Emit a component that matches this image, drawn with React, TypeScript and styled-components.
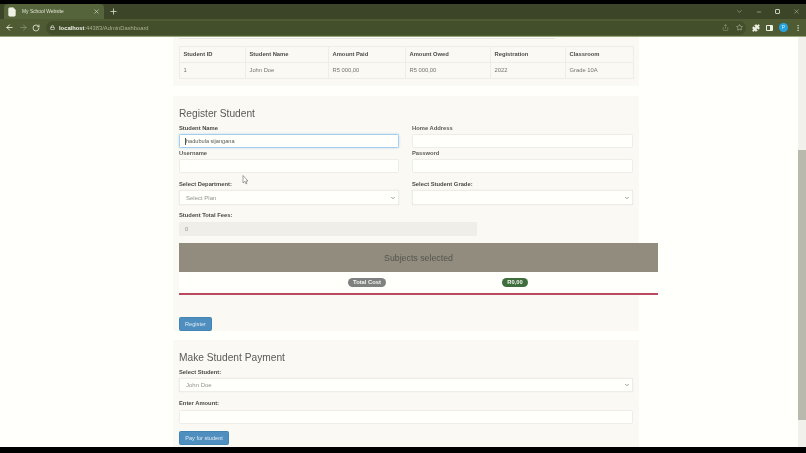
import React from "react";
import styled, { createGlobalStyle } from "styled-components";
import {
  ArrowLeft,
  ArrowRight,
  ChevronDown,
  EllipsisVertical,
  File,
  Lock,
  Minus,
  Plus,
  Puzzle,
  RotateCw,
  Share,
  Star,
  X,
} from "lucide-react";

const GlobalStyle = createGlobalStyle`
  html, body {
    margin: 0;
    padding: 0;
    overflow: hidden;
    background: #000;
  }
  * {
    box-sizing: border-box;
  }
`;

const Screen = styled.div`
  width: 806px;
  height: 453px;
  display: flex;
  flex-direction: column;
  background: #000;
  font-family: "Liberation Sans", Arial, sans-serif;
  filter: blur(0.4px);
  position: relative;
  overflow: hidden;
`;

const TabStrip = styled.div`
  height: 15px;
  margin-top: 4px;
  flex-shrink: 0;
  display: flex;
  align-items: flex-end;
  padding-left: 4px;
  background: #3c4527;
  color: #e6e8dc;
`;

const Tab = styled.div`
  width: 100px;
  height: 15px;
  display: flex;
  align-items: center;
  padding: 0 4px 0 3px;
  background: #56643c;
  border-radius: 4px 4px 0 0;
  font-size: 4.9px;
  gap: 5px;
`;

const TabTitle = styled.span`
  flex: 1;
  color: #dfe2d0;
`;

const NewTab = styled.div`
  width: 14px;
  margin-left: 2px;
  height: 15px;
  display: flex;
  align-items: center;
  justify-content: center;
`;

const WindowControls = styled.div`
  margin-left: auto;
  display: flex;
  align-items: center;
  height: 15px;
  padding-right: 6px;
  gap: 13px;
  color: #d8dbc8;
`;

const RestoreIcon = styled.div`
  width: 5px;
  height: 5px;
  border: 1px solid #c9ccb8;
  border-radius: 1px;
`;

const Toolbar = styled.div`
  height: 18px;
  flex-shrink: 0;
  display: flex;
  align-items: center;
  padding: 0 4px 0 5px;
  background: #4e5b33;
  color: #e2e5d4;
  border-bottom: 1px solid #98a47c;
`;

const NavIcons = styled.div`
  display: flex;
  align-items: center;
  gap: 4.5px;
  margin-right: 6px;
`;

const Omnibox = styled.div`
  flex: 1;
  height: 14px;
  display: flex;
  align-items: center;
  gap: 4px;
  padding: 0 3px 0 4px;
  border-radius: 7px;
  background: #434f2b;
  font-size: 5.8px;
  color: #a9b092;
`;

const Host = styled.span`
  color: #f0f1e6;
  font-weight: bold;
`;

const OmniEnd = styled.div`
  margin-left: auto;
  display: flex;
  align-items: center;
  gap: 7px;
  color: #a9af93;
`;

const ToolIcons = styled.div`
  display: flex;
  align-items: center;
  gap: 6px;
  margin-left: 6px;
`;

const SidePanelIcon = styled.div`
  width: 7px;
  height: 6px;
  border: 1px solid #f0f1e6;
  border-right-width: 3px;
  border-radius: 1px;
`;

const Avatar = styled.div`
  width: 9px;
  height: 9px;
  border-radius: 50%;
  background: #25a3e0;
  color: #cfeaf7;
  font-size: 5px;
  line-height: 9px;
  text-align: center;
`;

const Viewport = styled.div`
  height: 410px;
  flex-shrink: 0;
  display: flex;
  background: #fffffb;
  overflow: hidden;
`;

const Page = styled.div`
  flex: 1;
  padding-left: 173px;
  color: #3d3d3b;
`;

const Column = styled.div`
  width: 466px;
  display: flex;
  flex-direction: column;
`;

const Card = styled.section<{ $height: number; $mb?: number }>`
  height: ${(p) => p.$height}px;
  margin-bottom: ${(p) => p.$mb ?? 0}px;
  padding: 0 6px;
  background: #faf9f4;
  flex-shrink: 0;
`;

const TopCard = styled(Card)`
  position: relative;
  padding-top: 9px;
`;

const CutOffBox = styled.div`
  position: absolute;
  left: 6px;
  top: 0;
  width: 376px;
  height: 2px;
  background: #fdfdf9;
  border-bottom: 1px solid #e9e8e1;
`;

const Table = styled.table`
  width: 454px;
  border-collapse: collapse;
  table-layout: fixed;
  font-size: 5.8px;
`;

const Th = styled.th<{ $w: number }>`
  width: ${(p) => p.$w}px;
  height: 16px;
  padding: 0 3.5px 1px;
  text-align: left;
  font-weight: bold;
  color: #4c4c49;
  border: 1px solid #eeede6;
`;

const Td = styled.td`
  height: 16px;
  padding: 0 3.5px 1px;
  color: #75756f;
  border: 1px solid #eeede6;
`;

const FormTitle = styled.h3<{ $top: number }>`
  margin: 0;
  padding-top: ${(p) => p.$top}px;
  height: 29px;
  font-size: 10.2px;
  line-height: 12px;
  font-weight: normal;
  color: #5a5a56;
`;

const Row = styled.div`
  display: grid;
  grid-template-columns: 220px 221px;
  column-gap: 13px;
`;

const Field = styled.div`
  display: flex;
  flex-direction: column;
`;

const Label = styled.label<{ $h?: number; $pb?: number; $plain?: boolean }>`
  height: ${(p) => p.$h ?? 9}px;
  padding-bottom: ${(p) => p.$pb ?? 3}px;
  display: flex;
  align-items: flex-end;
  font-size: 5.8px;
  line-height: 6px;
  font-weight: bold;
  color: ${(p) => (p.$plain ? "#5c5c57" : "#4a4a45")};
`;

const Input = styled.div<{ $focus?: boolean; $disabled?: boolean; $w?: number }>`
  height: 14px;
  width: ${(p) => (p.$w ? `${p.$w}px` : "100%")};
  display: flex;
  align-items: center;
  padding: 0 5px;
  font-size: 5.6px;
  color: ${(p) => (p.$focus ? "#5a5a54" : "#94948e")};
  background: ${(p) => (p.$disabled ? "#efeee9" : "#fffffb")};
  border: 1px solid ${(p) => (p.$focus ? "#a6cdec" : "#eeede7")};
  border-radius: 1.5px;
  box-shadow: ${(p) => (p.$focus ? "0 0 2px rgba(102, 175, 233, 0.5)" : "none")};
`;

const Caret = styled.span`
  width: 1px;
  height: 7px;
  background: #55554f;
`;

const Select = styled(Input)<{ $h?: number }>`
  justify-content: space-between;
  padding: 0 2px 0 6px;
  height: ${(p) => p.$h ?? 15}px;
  font-size: 6px;
  box-shadow: 0 0 1px rgba(90, 90, 80, 0.25);
`;

const SubjectsPanel = styled.div`
  width: 479px;
  height: 52px;
  margin-top: 7px;
  display: flex;
  flex-direction: column;
  border-bottom: 2px solid #b94a60;
  background: #fffffb;
`;

const PanelHead = styled.div`
  height: 29px;
  display: flex;
  align-items: center;
  justify-content: center;
  background: #918c7e;
  color: #55534c;
  font-size: 8.8px;
`;

const PanelBody = styled.div`
  flex: 1;
  display: grid;
  grid-template-columns: 148px 148px;
  padding-left: 114px;
  align-items: center;
  justify-items: center;
`;

const Pill = styled.span<{ $green?: boolean }>`
  height: 9px;
  padding: 0 5px;
  border-radius: 5px;
  font-size: 5.8px;
  line-height: 9px;
  font-weight: bold;
  color: #f4f4ee;
  background: ${(p) => (p.$green ? "#3f6e3d" : "#7f8080")};
`;

const PrimaryButton = styled.button<{ $w: number; $mt: number }>`
  display: block;
  width: ${(p) => p.$w}px;
  height: 14px;
  margin-top: ${(p) => p.$mt}px;
  padding: 0;
  border: 1px solid #4285b3;
  border-radius: 1.5px;
  background: #4f8fc0;
  color: #dfeaf0;
  font-family: inherit;
  font-size: 5.6px;
`;

const Scrollbar = styled.div`
  width: 8px;
  padding-top: 113px;
  background: #f1f0ea;
`;

const Thumb = styled.div`
  height: 270px;
  background: #bab9ad;
`;

const MouseCursor = styled.svg`
  position: absolute;
  left: 242px;
  top: 175px;
`;

const headers: [string, number][] = [
  ["Student ID", 66],
  ["Student Name", 83],
  ["Amount Paid", 77],
  ["Amount Owed", 85],
  ["Registration", 75],
  ["Classroom", 68],
];

const cells = ["1", "John Doe", "R5 000,00", "R5 000,00", "2022", "Grade 10A"];

const Chevron = () => <ChevronDown size={6} strokeWidth={2.5} color="#66665f" />;

export default function App() {
  return (
    <>
      <GlobalStyle />
      <Screen>
        <TabStrip>
          <Tab>
            <File size={10} fill="#f0f1e6" color="#f0f1e6" strokeWidth={1.5} />
            <TabTitle>My School Website</TabTitle>
            <X size={7} strokeWidth={2} />
          </Tab>
          <NewTab>
            <Plus size={9} strokeWidth={2} />
          </NewTab>
          <WindowControls>
            <ChevronDown size={7} strokeWidth={1.5} />
            <Minus size={6} strokeWidth={2} />
            <RestoreIcon />
            <X size={7} strokeWidth={1.5} />
          </WindowControls>
        </TabStrip>
        <Toolbar>
          <NavIcons>
            <ArrowLeft size={9} strokeWidth={2.5} />
            <ArrowRight size={9} strokeWidth={2} color="#8e9878" />
            <RotateCw size={8} strokeWidth={2.5} />
          </NavIcons>
          <Omnibox>
            <Lock size={5} strokeWidth={3} color="#e8e9dc" />
            <span>
              <Host>localhost</Host>:44383/AdminDashboard
            </span>
            <OmniEnd>
              <Share size={7} strokeWidth={1.5} />
              <Star size={7} strokeWidth={1.5} color="#e8e9dc" />
            </OmniEnd>
          </Omnibox>
          <ToolIcons>
            <Puzzle size={8} fill="#f0f1e6" color="#f0f1e6" />
            <SidePanelIcon />
            <Avatar>P</Avatar>
            <EllipsisVertical size={8} strokeWidth={2.5} color="#c8cbb6" />
          </ToolIcons>
        </Toolbar>
        <Viewport>
          <Page>
            <Column>
              <TopCard $height={49} $mb={10}>
                <CutOffBox />
                <Table>
                  <thead>
                    <tr>
                      {headers.map(([name, w]) => (
                        <Th key={name} $w={w}>
                          {name}
                        </Th>
                      ))}
                    </tr>
                  </thead>
                  <tbody>
                    <tr>
                      {cells.map((c, i) => (
                        <Td key={i}>{c}</Td>
                      ))}
                    </tr>
                  </tbody>
                </Table>
              </TopCard>

              <Card $height={235} $mb={9}>
                <FormTitle $top={12}>Register Student</FormTitle>
                <Row>
                  <Field>
                    <Label>Student Name</Label>
                    <Input $focus>
                      <Caret />
                      hadubula sijangana
                    </Input>
                  </Field>
                  <Field>
                    <Label $plain>Home Address</Label>
                    <Input />
                  </Field>
                </Row>
                <Row>
                  <Field>
                    <Label $h={11} $plain>Username</Label>
                    <Input />
                  </Field>
                  <Field>
                    <Label $h={11} $plain>Password</Label>
                    <Input />
                  </Field>
                </Row>
                <Row>
                  <Field>
                    <Label $h={17}>Select Department:</Label>
                    <Select>
                      Select Plan
                      <Chevron />
                    </Select>
                  </Field>
                  <Field>
                    <Label $h={17}>Select Student Grade:</Label>
                    <Select>
                      <span />
                      <Chevron />
                    </Select>
                  </Field>
                </Row>
                <Field>
                  <Label $h={17} $pb={4}>Student Total Fees:</Label>
                  <Input $disabled $w={298}>0</Input>
                </Field>
                <SubjectsPanel>
                  <PanelHead>Subjects selected</PanelHead>
                  <PanelBody>
                    <Pill>Total Cost</Pill>
                    <Pill $green>R0,00</Pill>
                  </PanelBody>
                </SubjectsPanel>
                <PrimaryButton $w={33} $mt={22}>Register</PrimaryButton>
              </Card>

              <Card $height={120}>
                <FormTitle $top={12}>Make Student Payment</FormTitle>
                <Field>
                  <Label>Select Student:</Label>
                  <Select $h={14}>
                    John Doe
                    <Chevron />
                  </Select>
                </Field>
                <Field>
                  <Label $h={18} $pb={4}>Enter Amount:</Label>
                  <Input />
                </Field>
                <PrimaryButton $w={50} $mt={7}>Pay for student</PrimaryButton>
              </Card>
            </Column>
          </Page>
          <Scrollbar>
            <Thumb />
          </Scrollbar>
        </Viewport>
        <MouseCursor width="7" height="10" viewBox="0 0 7 10">
          <path d="M1 0.5 L1 8 L2.8 6.4 L4 9 L5 8.5 L3.9 6 L6 6 Z" fill="#fff" stroke="#666" strokeWidth="0.6" />
        </MouseCursor>
      </Screen>
    </>
  );
}
